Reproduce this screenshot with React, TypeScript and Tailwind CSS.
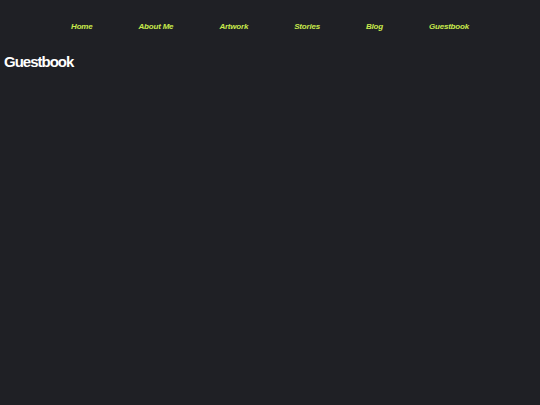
const links = ["Home", "About Me", "Artwork", "Stories", "Blog", "Guestbook"];

export default function App() {
  return (
    <div className="min-h-screen w-full bg-[#1f2025] text-white" style={{ fontFamily: '"Liberation Sans", Arial, sans-serif' }}>
      <nav className="flex justify-center gap-[46px] pt-[21px] pb-[19px]">
        {links.map((l) => (
          <a key={l} href="#" className="text-[8px] leading-[12px] font-bold italic text-[#c8ea4c] tracking-[-0.2px]">
            {l}
          </a>
        ))}
      </nav>
      <h1 className="px-[4px] text-[15px] leading-[20px] font-bold tracking-[-1px]">Guestbook</h1>
    </div>
  );
}
